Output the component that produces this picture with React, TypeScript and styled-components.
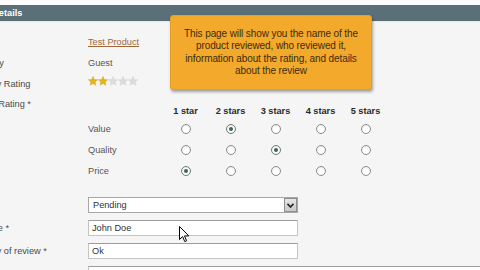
import React from "react";
import styled, { createGlobalStyle } from "styled-components";

const GlobalStyle = createGlobalStyle`
  html, body {
    margin: 0;
    padding: 0;
    background: #f5f5f5;
    overflow: hidden;
  }
  body {
    font-family: "Liberation Sans", Arial, sans-serif;
    font-size: 9.2px;
    color: #444;
  }
`;

const Page = styled.div`
  position: relative;
  width: 480px;
  height: 270px;
  overflow: hidden;
  background: #f5f5f5;
`;

const TopStrip = styled.div`
  height: 5px;
  background: #fcfcfc;
`;

const SectionHeader = styled.div`
  height: 16px;
  background: #5b6f79;
  border-bottom: 1px solid #e4e8ea;
  display: flex;
  align-items: center;
`;

const HeaderTitle = styled.h3`
  margin: 0 0 0 -42px;
  font-size: 9.2px;
  font-weight: 700;
  color: #fff;
  white-space: nowrap;
`;

const Form = styled.div`
  margin-left: -38px;
  padding-top: 9px;
  display: flex;
  flex-direction: column;
`;

const Row = styled.div<{ $height?: number; $gap?: number; $top?: boolean }>`
  display: grid;
  grid-template-columns: 126px 1fr;
  align-items: ${(p) => (p.$top ? "start" : "center")};
  min-height: ${(p) => p.$height ?? 21}px;
  margin-top: ${(p) => p.$gap ?? 0}px;
`;

const Label = styled.label<{ $lineHeight?: number }>`
  white-space: nowrap;
  color: #4a4a4a;
  line-height: ${(p) => p.$lineHeight ?? 14}px;
`;

const Value = styled.div`
  color: #555;
  white-space: nowrap;
`;

const ProductLink = styled.a`
  color: #a0683a;
  text-decoration: underline;
`;

const StarRow = styled.div`
  display: flex;
  margin-top: -6px;
`;

const RatingTable = styled.div`
  display: grid;
  grid-template-columns: 75px repeat(5, 45px);
  grid-auto-rows: 21px;
  grid-template-rows: 17px;
  padding-top: 8px;
  align-items: center;
`;

const ColHead = styled.div`
  text-align: center;
  font-weight: 700;
  color: #2a2a2a;
`;

const RowName = styled.div`
  color: #555;
  margin-top: -2px;
`;

const RadioCell = styled.div`
  display: flex;
  justify-content: center;
  margin-top: -2px;
`;

const Radio = styled.span<{ $checked?: boolean }>`
  width: 10px;
  height: 10px;
  box-sizing: border-box;
  border-radius: 50%;
  border: 1px solid ${(p) => (p.$checked ? "#6c7c74" : "#8d8d8d")};
  background: radial-gradient(circle at 50% 60%, #ffffff 40%, #e2e2e2 100%);
  display: flex;
  align-items: center;
  justify-content: center;
  &::after {
    content: "";
    width: 4px;
    height: 4px;
    border-radius: 50%;
    background: ${(p) => (p.$checked ? "#3c6650" : "transparent")};
  }
`;

const SelectBox = styled.div`
  width: 210px;
  height: 16px;
  box-sizing: border-box;
  border: 1px solid #a7a7a7;
  background: #fff;
  display: flex;
  align-items: center;
  justify-content: space-between;
  padding-left: 4px;
  color: #333;
`;

const SelectButton = styled.span`
  width: 13px;
  height: 14px;
  box-sizing: border-box;
  border: 1px solid #8f8f8f;
  background: linear-gradient(#e6e6e6, #c9c9c9);
  display: flex;
  align-items: center;
  justify-content: center;
`;

const TextInput = styled.div<{ $wide?: boolean }>`
  width: ${(p) => (p.$wide ? 430 : 210)}px;
  height: ${(p) => (p.$wide ? 40 : 16)}px;
  box-sizing: border-box;
  border: 1px solid #c4c4c4;
  border-top-color: #9c9c9c;
  background: #fff;
  padding-left: 3px;
  line-height: 14px;
  color: #333;
`;

const Tooltip = styled.div`
  position: absolute;
  left: 170px;
  top: 15px;
  width: 202px;
  height: 75px;
  box-sizing: border-box;
  background: #f3a92b;
  border: 1px solid #e79d22;
  border-radius: 3px;
  box-shadow: 1px 2px 3px rgba(0, 0, 0, 0.35);
  padding-top: 12px;
  text-align: center;
  color: #3c2b10;
  font-size: 10px;
  line-height: 12.4px;
  letter-spacing: -0.1px;
  white-space: nowrap;
`;

const Cursor = styled.svg`
  position: absolute;
  left: 179px;
  top: 226px;
`;

function Star({ filled }: { filled: boolean }) {
  return (
    <svg width="10" height="10" viewBox="0 0 10 10">
      <polygon
        points="5,0.4 6.3,3.5 9.6,3.7 7.1,5.9 7.9,9.3 5,7.5 2.1,9.3 2.9,5.9 0.4,3.7 3.7,3.5"
        fill={filled ? "#e5b417" : "#dcdcdc"}
        stroke={filled ? "#c99a10" : "#d0d0d0"}
        strokeWidth="0.4"
      />
    </svg>
  );
}

const ratings: { name: string; checked: number }[] = [
  { name: "Value", checked: 2 },
  { name: "Quality", checked: 3 },
  { name: "Price", checked: 1 },
];

export default function App() {
  return (
    <Page>
      <GlobalStyle />
      <TopStrip />
      <SectionHeader>
        <HeaderTitle>Review Details</HeaderTitle>
      </SectionHeader>
      <Form>
        <Row>
          <Label>Product</Label>
          <Value>
            <ProductLink>Test Product</ProductLink>
          </Value>
        </Row>
        <Row>
          <Label>Posted By</Label>
          <Value>Guest</Value>
        </Row>
        <Row>
          <Label>Summary Rating</Label>
          <Value>
            <StarRow>
              {[1, 2, 3, 4, 5].map((i) => (
                <Star key={i} filled={i <= 2} />
              ))}
            </StarRow>
          </Value>
        </Row>
        <Row $top>
          <Label $lineHeight={21}>Detailed Rating *</Label>
          <RatingTable>
            <div />
            <ColHead>1 star</ColHead>
            <ColHead>2 stars</ColHead>
            <ColHead>3 stars</ColHead>
            <ColHead>4 stars</ColHead>
            <ColHead>5 stars</ColHead>
            {ratings.map((r) => (
              <React.Fragment key={r.name}>
                <RowName>{r.name}</RowName>
                {[1, 2, 3, 4, 5].map((i) => (
                  <RadioCell key={i}>
                    <Radio $checked={i === r.checked} />
                  </RadioCell>
                ))}
              </React.Fragment>
            ))}
          </RatingTable>
        </Row>
        <Row $height={16} $gap={15}>
          <Label>Status</Label>
          <SelectBox>
            Pending
            <SelectButton>
              <svg width="7" height="5" viewBox="0 0 7 5">
                <path d="M0.5 0.8 L3.5 4 L6.5 0.8" fill="none" stroke="#222" strokeWidth="1.6" />
              </svg>
            </SelectButton>
          </SelectBox>
        </Row>
        <Row $height={16} $gap={7}>
          <Label>Nickname *</Label>
          <TextInput>John Doe</TextInput>
        </Row>
        <Row $height={16} $gap={7}>
          <Label>Summary of review *</Label>
          <TextInput>Ok</TextInput>
        </Row>
        <Row $height={40} $gap={7} $top>
          <Label>Review *</Label>
          <TextInput $wide />
        </Row>
      </Form>
      <Tooltip>
        This page will show you the name of the
        <br />
        product reviewed, who reviewed it,
        <br />
        information about the rating, and details
        <br />
        about the review
      </Tooltip>
      <Cursor width="11" height="17" viewBox="0 0 11 17">
        <path
          d="M0.5 0.5 L0.5 13.5 L3.6 10.6 L5.8 15.6 L7.6 14.8 L5.5 9.9 L9.8 9.9 Z"
          fill="#fff"
          stroke="#000"
          strokeWidth="1"
          strokeLinejoin="round"
        />
      </Cursor>
    </Page>
  );
}
